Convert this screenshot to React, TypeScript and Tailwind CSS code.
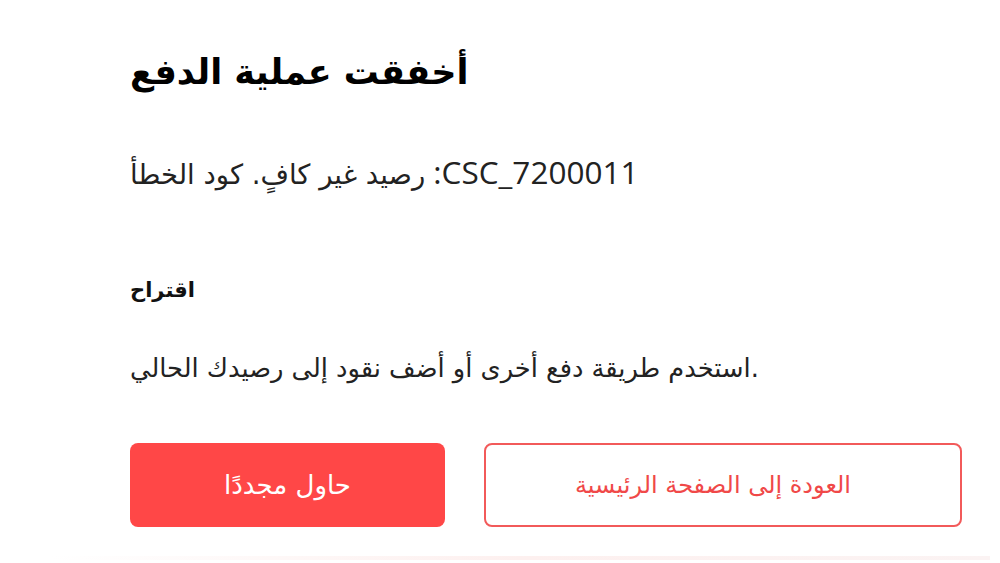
export default function App() {
  return (
    <div className="relative w-[1000px] h-[563px] bg-white overflow-hidden font-['Open_Sans','DejaVu_Sans',sans-serif]">
      <div className="pl-[130px] pr-[38px] pt-[44px]">
        <h1 className="text-[35px] leading-[56px] font-bold text-black font-['DejaVu_Sans',sans-serif]">
          أخفقت عملية الدفع
        </h1>

        <p className="mt-[52px] h-[40px] leading-[40px] text-[#222] whitespace-nowrap">
          <span className="text-[27.5px] font-['DejaVu_Sans',sans-serif]">رصيد غير كافٍ. كود الخطأ</span>
          <span className="text-[31.5px] font-['Open_Sans',sans-serif]"> :CSC_7200011</span>
        </p>

        <h2 className="mt-[80px] text-[21px] leading-[36px] font-bold text-[#111] font-['DejaVu_Sans',sans-serif]">
          اقتراح
        </h2>

        <p className="mt-[42px] text-[25.7px] leading-[36px] text-[#222] whitespace-nowrap font-['DejaVu_Sans',sans-serif]">
          استخدم طريقة دفع أخرى أو أضف نقود إلى رصيدك الحالي.
        </p>

        <div className="mt-[57px] flex gap-[39px] font-['DejaVu_Sans',sans-serif]">
          <button className="w-[315px] h-[84px] shrink-0 rounded-[8px] bg-[#ff4747] text-white text-[26px]">
            حاول مجددًا
          </button>
          <button className="w-[478px] h-[84px] shrink-0 rounded-[8px] border-2 border-[#f25a5a] bg-white pr-[20px] text-[#f04848] text-[24px]">
            العودة إلى الصفحة الرئيسية
          </button>
        </div>
      </div>

      <div className="absolute left-[50px] right-[10px] top-[556px] h-[4px] bg-gradient-to-r from-transparent via-[#fdf0ef] to-[#fbf3f3]" />
    </div>
  );
}
